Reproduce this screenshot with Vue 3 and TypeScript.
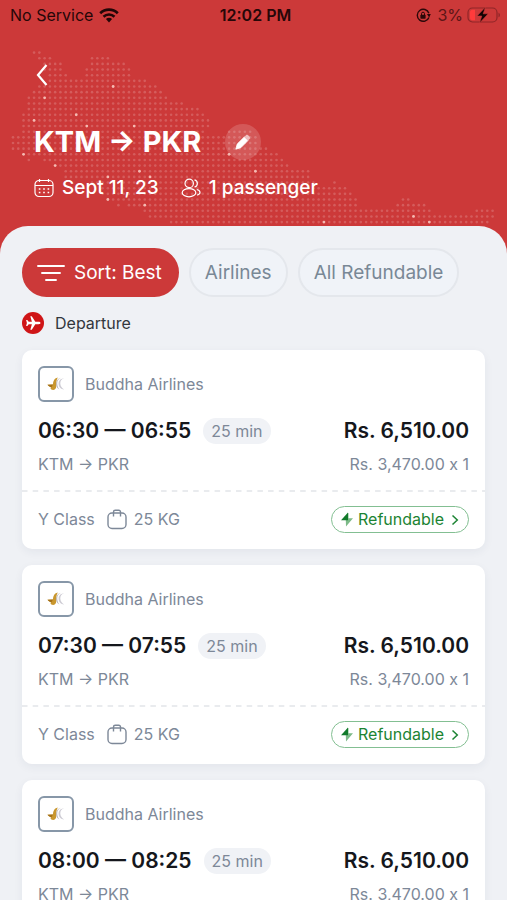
<script setup lang="ts">
interface Flight {
  id: number
  airline: string
  departs: string
  arrives: string
  duration: string
  price: string
  fare: string
}

interface Dot {
  x: number
  y: number
}

const flights: Flight[] = [
  { id: 1, airline: 'Buddha Airlines', departs: '06:30', arrives: '06:55', duration: '25 min', price: 'Rs. 6,510.00', fare: 'Rs. 3,470.00 x 1' },
  { id: 2, airline: 'Buddha Airlines', departs: '07:30', arrives: '07:55', duration: '25 min', price: 'Rs. 6,510.00', fare: 'Rs. 3,470.00 x 1' },
  { id: 3, airline: 'Buddha Airlines', departs: '08:00', arrives: '08:25', duration: '25 min', price: 'Rs. 6,510.00', fare: 'Rs. 3,470.00 x 1' },
]

// Dotted map of Nepal: each row lists [first column, last column] runs.
const columnStep = 5.27
const rowStep = 5.65
const mapRows: number[][][] = [
  [[4, 5]],
  [[5, 7], [15, 18]],
  [[6, 9], [15, 21]],
  [[6, 9], [14, 22]],
  [[7, 10], [14, 22]],
  [[7, 25]],
  [[5, 27]],
  [[4, 28]],
  [[3, 29]],
  [[3, 32]],
  [[3, 35]],
  [[2, 36]],
  [[2, 37]],
  [[2, 37]],
  [[2, 36], [41, 45]],
  [[0, 46]],
  [[0, 46]],
  [[0, 48]],
  [[2, 50]],
  [[3, 3], [6, 51]],
  [[8, 52]],
  [[10, 56]],
  [[10, 56]],
  [[15, 57], [61, 61]],
  [[17, 63]],
  [[17, 64]],
  [[18, 65], [74, 75]],
  [[20, 20], [22, 65], [73, 78]],
  [[25, 79], [88, 91]],
  [[26, 91]],
  [[30, 90]],
]
const brightCells: Record<number, number[]> = {
  6: [19], 8: [6], 11: [12], 12: [4], 13: [14, 23], 18: [2, 41], 20: [8], 21: [24, 46],
  22: [18, 26], 26: [18], 27: [25], 29: [76], 30: [59, 79],
}

const place = (column: number, row: number): Dot => ({
  x: 13 + column * columnStep,
  y: 52.6 + row * rowStep,
})

const dots: Dot[] = mapRows.flatMap((runs, row) =>
  runs.flatMap(([from, to]) =>
    Array.from({ length: to - from + 1 }, (_, i) => place(from + i, row)),
  ),
)
const brightDots: Dot[] = Object.entries(brightCells).flatMap(([row, columns]) =>
  columns.map((column) => place(column, Number(row))),
)
</script>

<template>
  <div class="app">
    <header class="header">
      <svg class="map" width="507" height="228" viewBox="0 0 507 228" aria-hidden="true">
        <circle v-for="(d, i) in dots" :key="i" :cx="d.x" :cy="d.y" r="1.3" fill="#fff" fill-opacity=".18" />
        <circle v-for="(d, i) in brightDots" :key="'b' + i" :cx="d.x" :cy="d.y" r="1.4" fill="#ffd9cf" fill-opacity=".75" />
      </svg>

      <div class="status">
        <div class="status-side">
          <span>No Service</span>
          <svg width="20" height="15" viewBox="0 0 20 15" aria-hidden="true">
            <path d="M1.2 5.2a12.6 12.6 0 0 1 17.6 0" fill="none" stroke="#210607" stroke-width="2.7" />
            <path d="M4.5 8.7a7.9 7.9 0 0 1 11 0" fill="none" stroke="#210607" stroke-width="2.6" />
            <path d="M6.9 11.1a4.5 4.5 0 0 1 6.2 0L10 14.4z" fill="#210607" />
          </svg>
        </div>
        <span class="clock">12:02 PM</span>
        <div class="status-side status-end">
          <svg width="15" height="15" viewBox="0 0 15 15" aria-hidden="true">
            <path d="M12.9 5.2A6 6 0 1 0 12.9 9.4" fill="none" stroke="#2b0809" stroke-width="1.4" />
            <path d="M10.9 6h3.9l-1.6 3.4z" fill="#2b0809" />
            <rect x="4.4" y="6.8" width="5.2" height="4" rx=".7" fill="#2b0809" />
            <path d="M5.5 7V5.7a1.5 1.5 0 0 1 3 0V7" fill="none" stroke="#2b0809" stroke-width="1" />
          </svg>
          <span class="charge">3%</span>
          <svg width="34" height="18" viewBox="0 0 34 18" aria-hidden="true">
            <rect x="1" y="2" width="29" height="14" rx="4.5" fill="none" stroke="#8f2628" stroke-width="1.2" />
            <path d="M5.5 3.8H8v10.4H5.5A2.5 2.5 0 0 1 3 11.7V6.300a2.500 2.500 0 0 1 2.500-2.500z" fill="#ff3b3b" />
            <path d="M31.500 6.700c1.900.6 1.900 4 0 4.600z" fill="#8f2628" />
            <path d="M18.500 1 10 10h4.800l-2.300 7 8.700-9.200h-5z" fill="#120203" stroke="#cc3939" stroke-width=".6" />
          </svg>
        </div>
      </div>

      <button class="back" type="button" aria-label="Back">
        <svg width="14" height="24" viewBox="0 0 14 24" aria-hidden="true">
          <path d="M11.500 2 3 12l8.500 10" fill="none" stroke="#fff" stroke-width="2.200" />
        </svg>
      </button>

      <div class="title-row">
        <h1>KTM → PKR</h1>
        <button class="edit" type="button" aria-label="Edit search">
          <svg width="18" height="18" viewBox="0 0 18 18" aria-hidden="true">
            <path d="M1.800 16.200l1.400-5.100L10.300 4l3.600 3.600-7.100 7.100z" fill="#fff" stroke="#fff" stroke-width=".8" stroke-linejoin="round" />
            <path d="M10.300 4l1.900-1.900c1.200-1.200 4.900 2.400 3.600 3.600L13.900 7.600z" fill="#f0bfc1" />
          </svg>
        </button>
      </div>

      <div class="trip">
        <svg width="20" height="20" viewBox="0 0 20 20" fill="none" stroke="#fff" stroke-width="1.200" aria-hidden="true">
          <rect x="1" y="2.500" width="18" height="16" rx="4" />
          <path d="M1 7.500h18M5.500 1v3M14.500 1v3" />
          <path d="M4.800 11h1.600M9.200 11h1.600M13.600 11h1.600M4.800 14.500h1.600M9.200 14.500h1.600M13.600 14.500h1.600" stroke-width="1.600" />
        </svg>
        <span>Sept 11, 23</span>
        <svg class="people" width="20" height="20" viewBox="0 0 20 20" fill="none" stroke="#fff" stroke-width="1.200" aria-hidden="true">
          <circle cx="8.200" cy="5.400" r="4.200" />
          <ellipse cx="8" cy="14.700" rx="6.800" ry="4.100" />
          <path d="M13.500 1.800a3.700 3.700 0 0 1 0 7.200M15.800 11.500c4.200 1.100 4.200 4.700.4 5.700" />
        </svg>
        <span>1 passenger</span>
      </div>
    </header>

    <main class="sheet">
      <div class="filters">
        <button class="chip chip-active" type="button">
          <svg width="30" height="18" viewBox="0 0 30 18" stroke="#fff" stroke-width="1.900" stroke-linecap="round" aria-hidden="true">
            <path d="M2 2h26M6 9h18M10 16h10" />
          </svg>
          Sort: Best
        </button>
        <button class="chip" type="button">Airlines</button>
        <button class="chip" type="button">All Refundable</button>
      </div>

      <h2 class="section">
        <svg width="22" height="22" viewBox="0 0 22 22" aria-hidden="true">
          <circle cx="11" cy="11" r="11" fill="#cf1517" />
          <path d="M18.500 11c0-.8-.9-1.200-2-1.200h-3.200L9.800 4.300H8.300l1.600 5.500H6.700L5.300 8.100H4.100l.8 2.900-.8 2.900h1.200l1.400-1.700h3.200l-1.600 5.500h1.500l3.500-5.500h3.200c1.100 0 2-.4 2-1.200z" fill="#fff" />
        </svg>
        Departure
      </h2>

      <article v-for="f in flights" :key="f.id" class="card">
        <div class="airline">
          <span class="logo">
            <svg width="18" height="16" viewBox="0 0 18 16" aria-hidden="true">
              <path d="M10.800 1.500C7.600 2.200 6 4.600 5.900 8.600L.5 8.800c1 1.300 2.300 1.900 3.500 2.200-.7.900-.5 2 .4 2.600 2.400 1 4.800-.2 4.900-3.300C9.200 6.600 9.400 3.800 10.800 1.500z" fill="#c9972e" />
              <path d="M.5 8.800c1 1.500 2.500 2.200 4 2.400l1.500-2.600z" fill="#a5721a" />
              <path d="M14 1.700c-2.700 1-3.900 3.200-3.800 6 .1 2.600.9 4.300 2.300 5.800-2-.6-3.200-2.500-3.300-5.400C9.200 4.600 11.100 2.200 14 1.700z" fill="#b3b0b6" />
              <path d="M17.300 2.300c-2.900.8-4.100 2.700-4 5.300.1 2.300 1.300 4.300 3.900 5.900-3.400-.2-5.500-2.500-5.600-5.700C11.600 4.600 13.900 2.400 17.300 2.300z" fill="#ceccd4" />
            </svg>
          </span>
          {{ f.airline }}
        </div>
        <div class="summary">
          <div class="times">
            <strong>{{ f.departs }} — {{ f.arrives }}</strong>
            <span class="duration">{{ f.duration }}</span>
          </div>
          <strong>{{ f.price }}</strong>
        </div>
        <div class="details">
          <span>KTM → PKR</span>
          <span class="fare">{{ f.fare }}</span>
        </div>
        <svg class="divider" width="100%" height="2" aria-hidden="true">
          <line x1="0" y1="1" x2="100%" y2="1" stroke="#e9ebee" stroke-width="2" stroke-dasharray="5.500 5.200" />
        </svg>
        <div class="extras">
          <span>Y Class</span>
          <svg class="bag" width="20" height="21" viewBox="0 0 20 21" fill="none" stroke="#7d8898" stroke-width="1.400" aria-hidden="true">
            <rect x="1" y="4" width="18" height="15.500" rx="4" />
            <path d="M6.500 7.500V3a1.700 1.700 0 0 1 1.700-1.700h3.600A1.700 1.700 0 0 1 13.500 3v4.500" />
          </svg>
          <span>25 KG</span>
          <button class="refund" type="button">
            <svg width="12" height="15" viewBox="0 0 12 15" aria-hidden="true">
              <path d="M6.500 1v7H4.800L5 14.500 12 6.300H7.500V1z" fill="#7cba88" />
              <path d="M7 .5 0 8.200h7z" fill="#117a2b" />
            </svg>
            Refundable
            <svg class="chevron" width="8" height="12" viewBox="0 0 8 12" aria-hidden="true">
              <path d="M1.500 1.500 6.300 6l-4.800 4.500" fill="none" stroke="#1c8433" stroke-width="1.500" />
            </svg>
          </button>
        </div>
      </article>
    </main>
  </div>
</template>

<style>
body {
  margin: 0;
  background: #eff1f5;
}
</style>

<style scoped>
.app {
  height: 100vh;
  display: flex;
  flex-direction: column;
  overflow: hidden;
  background: #cc3939;
  font-family: Inter, "Liberation Sans", sans-serif;
  color: #7d8898;
}

button {
  border: 0;
  padding: 0;
  margin: 0;
  background: none;
  font: inherit;
  color: inherit;
  cursor: pointer;
}

svg {
  display: block;
  flex: none;
}

h1,
h2 {
  margin: 0;
}

.header {
  position: relative;
  flex: none;
  color: #fff;
  padding-bottom: 26px;
}

.map {
  position: absolute;
  top: 0;
  left: 0;
}

.status {
  position: relative;
  display: grid;
  grid-template-columns: 1fr auto 1fr;
  align-items: center;
  height: 30px;
  padding: 0 6px 0 10px;
  color: #260708;
  font-size: 16px;
}

.status-side {
  display: flex;
  align-items: center;
  gap: 6px;
}

.status-end {
  justify-content: flex-end;
  gap: 4px;
}

.clock {
  font-weight: 600;
}

.charge {
  padding-left: 2px;
  color: #5c1516;
}

.back {
  position: relative;
  display: block;
  margin: 33px 0 0 35px;
}

.title-row {
  position: relative;
  display: flex;
  align-items: center;
  gap: 24px;
  margin-top: 37px;
  padding-left: 34px;
}

h1 {
  font-size: 29px;
  line-height: 36px;
  font-weight: 700;
}

.edit {
  display: grid;
  place-items: center;
  width: 36px;
  height: 36px;
  border-radius: 50%;
  background: rgba(255, 255, 255, 0.16);
}

.trip {
  position: relative;
  display: flex;
  align-items: center;
  gap: 8px;
  margin-top: 16px;
  padding-left: 34px;
  font-size: 19px;
  line-height: 24px;
  font-weight: 500;
}

.people {
  margin-left: 14px;
}

.sheet {
  position: relative;
  flex: 1;
  min-height: 0;
  overflow: hidden;
  padding: 22px 22px 0;
  border-radius: 28px 28px 0 0;
  background: #eff1f5;
}

.filters {
  display: flex;
  gap: 10px;
}

.chip {
  display: flex;
  align-items: center;
  gap: 8px;
  height: 49px;
  padding: 0 14px;
  border: 2px solid #e4e7ec;
  border-radius: 25px;
  background: #f0f3f8;
  color: #798896;
  font-size: 19px;
  white-space: nowrap;
}

.chip-active {
  padding: 0 15px 0 12px;
  border-color: #cc3939;
  background: #cc3939;
  color: #fff;
}

.section {
  display: flex;
  align-items: center;
  gap: 11px;
  margin: 15px 0 16px;
  font-size: 16px;
  line-height: 22px;
  font-weight: 400;
  color: #33373d;
}

.card {
  margin-bottom: 16px;
  padding: 16px;
  border-radius: 10px;
  background: #fff;
  box-shadow: 0 3px 10px rgba(40, 55, 80, 0.06);
  font-size: 16px;
}

.airline {
  display: flex;
  align-items: center;
  gap: 11px;
}

.logo {
  display: grid;
  place-items: center;
  box-sizing: border-box;
  width: 36px;
  height: 36px;
  border: 2px solid #8797a8;
  border-radius: 6px;
}

.summary,
.details {
  display: flex;
  align-items: center;
  justify-content: space-between;
  white-space: nowrap;
}

.summary {
  margin-top: 16px;
  color: #15171c;
  font-size: 21px;
  line-height: 26px;
}

.summary strong {
  font-weight: 600;
}

.times {
  display: flex;
  align-items: center;
  gap: 12px;
}

.duration {
  padding: 0 8px;
  border-radius: 13px;
  background: #f0f2f6;
  color: #7d8898;
  font-size: 16px;
}

.details {
  margin-top: 10px;
  line-height: 20px;
}

.fare {
  font-feature-settings: "calt" 0;
}

.divider {
  width: calc(100% + 32px);
  margin: 16px -16px 14px;
}

.extras {
  display: flex;
  align-items: center;
  line-height: 27px;
}

.bag {
  margin: 0 7px 0 12px;
}

.refund {
  display: flex;
  align-items: center;
  gap: 5px;
  box-sizing: border-box;
  height: 27px;
  margin-left: auto;
  padding: 0 9px;
  border: 1px solid #83bf92;
  border-radius: 14px;
  color: #1c8433;
}

.chevron {
  margin-left: 2px;
}
</style>
